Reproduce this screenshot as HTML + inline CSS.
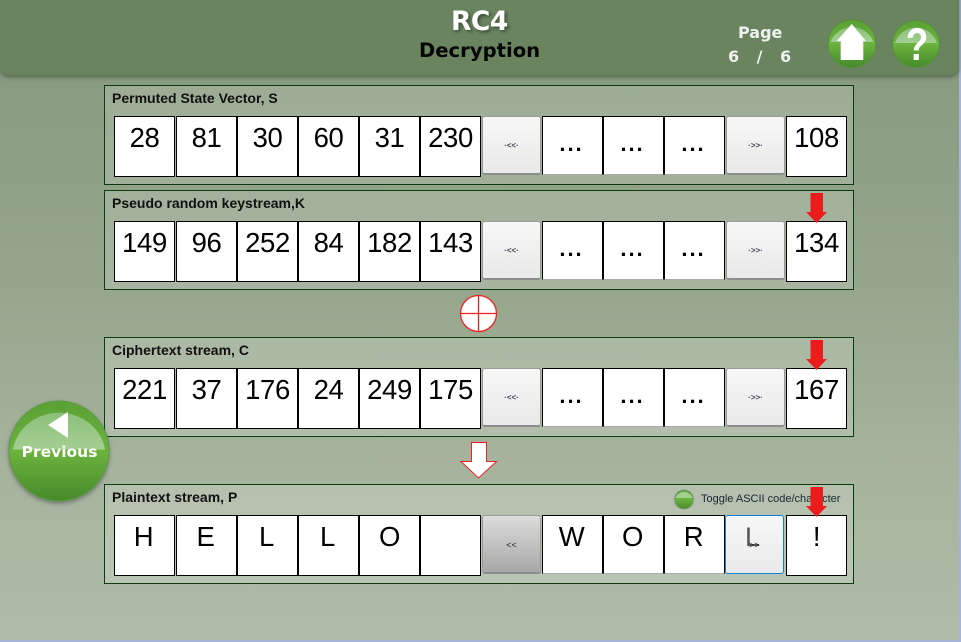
<!DOCTYPE html>
<html><head><meta charset="utf-8">
<style>
html,body{margin:0;padding:0}
body{width:961px;height:642px;overflow:hidden;position:relative;background:#a6b4d6;font-family:"Liberation Sans",sans-serif}
#bg{position:absolute;left:0;top:0;width:959px;height:640px;background:linear-gradient(#7f9475 0,#8a9d81 100px,#97a78e 300px,#a5b29c 450px,#afbcaa 640px)}
#hdr{position:absolute;left:0;top:-6px;width:959px;height:81px;border-radius:0 0 9px 9px;background:#69845f;box-shadow:0 2px 4px rgba(50,60,45,.6)}
.t{position:absolute;white-space:nowrap;font-family:"DejaVu Sans",sans-serif;font-weight:bold}
.panel{position:absolute;left:104px;width:748px;height:98px;border:1px solid #0d3b0d;background:rgba(255,255,255,.17)}
.lb{position:absolute;left:112px;font:bold 14px "Liberation Sans",sans-serif;color:#111;white-space:nowrap}
.c{position:absolute;width:59px;height:59px;border:1px solid #000;background:#fff;text-align:center;font:27.5px/42px "Liberation Sans",sans-serif;letter-spacing:-.4px;color:#000}
.n{border-bottom:1px solid #aaa;height:57px;padding-right:2px;width:57px}
.d{font:bold 22px/54px "Liberation Sans",sans-serif;letter-spacing:2px}
.b{position:absolute;width:57px;height:56px;border:1px solid #9a9a9a;border-bottom:2px solid #8d8d8d;border-radius:3px;background:linear-gradient(#f7f7f7,#e9e9e9);text-align:center;font:bold 8px/58px "Liberation Sans",sans-serif;color:#445}
.b.g{background:linear-gradient(#dcdcdc,#a8a8a8);color:#222;font:9px/58px "Liberation Sans",sans-serif}
.b.f{border:1px solid #0a84d8;background:linear-gradient(#f7f7f7,#eaeaea);height:57px;font:27px/42px "Liberation Sans",sans-serif;color:#555;padding-right:0;text-indent:-4px}
svg{position:absolute;overflow:visible}
</style></head>
<body>
<div id="bg"></div>
<div id="hdr"></div>
<div class="t" style="left:451px;top:6px;font:bold 26.500px/32px 'DejaVu Sans',sans-serif;color:#fff;text-shadow:2px 2px 3px #3e4f38;letter-spacing:-.5px">RC4</div>
<div class="t" style="left:419px;top:39px;font:bold 19.600px/24px 'DejaVu Sans',sans-serif;color:#050505">Decryption</div>
<div class="t" style="left:738px;top:24px;font-size:16px;line-height:18px;color:#f0f0f0">Page</div>
<div class="t" style="left:728px;top:48px;font-size:16px;line-height:18px;color:#f0f0f0;white-space:pre;word-spacing:3.200px">6  /  6</div>

<svg style="left:0;top:0" width="961" height="642">
<defs>
<linearGradient id="gr" x1="0" y1="0" x2="0" y2="1"><stop offset="0" stop-color="#5aa034"/><stop offset=".5" stop-color="#6cb33e"/><stop offset="1" stop-color="#468a2a"/></linearGradient>
<linearGradient id="hl" x1="0" y1="0" x2="0" y2="1"><stop offset="0" stop-color="#8cc07a"/><stop offset="1" stop-color="#a3cf92"/></linearGradient>
</defs>
<circle cx="852" cy="43.700" r="24" fill="url(#gr)" stroke="#548f40" stroke-width="1"/>
<path d="M830.500 42 A23 23 0 0 1 873.500 42 Z" fill="url(#hl)"/>
<path d="M836.700 41 L851.700 24 L866 41 H863.300 V60 H840.700 V41 Z" fill="#fff"/>
<circle cx="916" cy="44" r="23.500" fill="url(#gr)" stroke="#548f40" stroke-width="1"/>
<path d="M895 43 A22 22 0 0 1 937 43 Z" fill="url(#hl)"/>
<text x="0" y="60" transform="translate(917 0) scale(.82 1)" text-anchor="middle" font-family="Liberation Sans" font-weight="bold" font-size="45" fill="#fff">?</text>
</svg>

<div class="panel" style="top:85px"></div>
<div class="panel" style="top:190px"></div>
<div class="panel" style="top:337px"></div>
<div class="panel" style="top:484px"></div>

<div class="lb" style="top:90px">Permuted State Vector, S</div>
<div class="lb" style="top:195px">Pseudo random keystream,K</div>
<div class="lb" style="top:342px">Ciphertext stream, C</div>
<div class="lb" style="top:489px">Plaintext stream, P</div>

<!-- row 1 -->
<div class="c" style="left:114px;top:116px">28</div>
<div class="c" style="left:176px;top:116px">81</div>
<div class="c" style="left:237px;top:116px">30</div>
<div class="c" style="left:298px;top:116px">60</div>
<div class="c" style="left:359px;top:116px">31</div>
<div class="c" style="left:420px;top:116px">230</div>
<div class="b" style="left:482px;top:116px">·&lt;&lt;·</div>
<div class="c n d" style="left:542px;top:116px">...</div>
<div class="c n d" style="left:603px;top:116px">...</div>
<div class="c n d" style="left:664px;top:116px">...</div>
<div class="b" style="left:726px;top:116px">·&gt;&gt;·</div>
<div class="c" style="left:786px;top:116px">108</div>
<!-- row 2 -->
<div class="c" style="left:114px;top:221px">149</div>
<div class="c" style="left:176px;top:221px">96</div>
<div class="c" style="left:237px;top:221px">252</div>
<div class="c" style="left:298px;top:221px">84</div>
<div class="c" style="left:359px;top:221px">182</div>
<div class="c" style="left:420px;top:221px">143</div>
<div class="b" style="left:482px;top:221px">·&lt;&lt;·</div>
<div class="c n d" style="left:542px;top:221px">...</div>
<div class="c n d" style="left:603px;top:221px">...</div>
<div class="c n d" style="left:664px;top:221px">...</div>
<div class="b" style="left:726px;top:221px">·&gt;&gt;·</div>
<div class="c" style="left:786px;top:221px">134</div>
<!-- row 3 -->
<div class="c" style="left:114px;top:368px">221</div>
<div class="c" style="left:176px;top:368px">37</div>
<div class="c" style="left:237px;top:368px">176</div>
<div class="c" style="left:298px;top:368px">24</div>
<div class="c" style="left:359px;top:368px">249</div>
<div class="c" style="left:420px;top:368px">175</div>
<div class="b" style="left:482px;top:368px">·&lt;&lt;·</div>
<div class="c n d" style="left:542px;top:368px">...</div>
<div class="c n d" style="left:603px;top:368px">...</div>
<div class="c n d" style="left:664px;top:368px">...</div>
<div class="b" style="left:726px;top:368px">·&gt;&gt;·</div>
<div class="c" style="left:786px;top:368px">167</div>
<!-- row 4 -->
<div class="c" style="left:114px;top:515px;text-indent:-2px">H</div>
<div class="c" style="left:176px;top:515px;text-indent:-2px">E</div>
<div class="c" style="left:237px;top:515px;text-indent:-2px">L</div>
<div class="c" style="left:298px;top:515px;text-indent:-2px">L</div>
<div class="c" style="left:359px;top:515px">O</div>
<div class="c" style="left:420px;top:515px"></div>
<div class="b g" style="left:482px;top:515px">&lt;&lt;</div>
<div class="c n" style="left:542px;top:515px">W</div>
<div class="c n" style="left:603px;top:515px">O</div>
<div class="c n" style="left:664px;top:515px">R</div>
<div class="b f" style="left:725px;top:515px">L</div>
<div style="position:absolute;left:749px;top:537px;font:9px/16px 'Liberation Sans',sans-serif;color:#222">&gt;&gt;</div>
<div class="c" style="left:786px;top:515px">!</div>

<div style="position:absolute;left:701px;top:493px;font:11px/13px 'Liberation Sans',sans-serif;color:#1a2530;white-space:nowrap">Toggle ASCII code/character</div>

<svg style="left:0;top:0" width="961" height="642">
<!-- toggle -->
<circle cx="684" cy="499.500" r="9.500" fill="url(#gr)" stroke="#7d9a76"/>
<path d="M675.500 498 A9 9 0 0 1 692.500 498 Z" fill="#a0cf8e"/>
<!-- xor -->
<circle cx="478.500" cy="313.500" r="18" fill="#fff" stroke="#ee2020" stroke-width="1.300"/>
<path d="M478.500 295.500V331.500M460.500 313.500H496.500" stroke="#ee2020" stroke-width="1.300" fill="none"/>
<!-- white arrow -->
<path d="M471.500 442.500H486.500V461.500H496.500L478.500 478L461 461.500H471.500Z" fill="#fff" stroke="#ee2020" stroke-width="1"/>
<!-- red arrows -->
<path d="M810.500 193H823V212H827L816.500 223L806 212H810.500Z" fill="#ec1c1c"/>
<path d="M810.500 340H823V359H827L816.500 370L806 359H810.500Z" fill="#ec1c1c"/>
<path d="M810.500 487H823V506H827L816.500 517L806 506H810.500Z" fill="#ec1c1c"/>
<!-- previous -->
<circle cx="59" cy="451" r="50" fill="url(#gr)" stroke="#5c9a46" stroke-width="1" style="filter:drop-shadow(0 2px 2px rgba(60,60,60,.5))"/>
<path d="M13 449.500 A46.500 43 0 0 1 105 449.500 Z" fill="url(#hl)"/>
<path d="M48 425L68 412V438Z" fill="#fff"/>
<text x="59.500" y="457" text-anchor="middle" font-family="DejaVu Sans" font-weight="bold" font-size="15.500" fill="#fff">Previous</text>
</svg>
</body></html>
